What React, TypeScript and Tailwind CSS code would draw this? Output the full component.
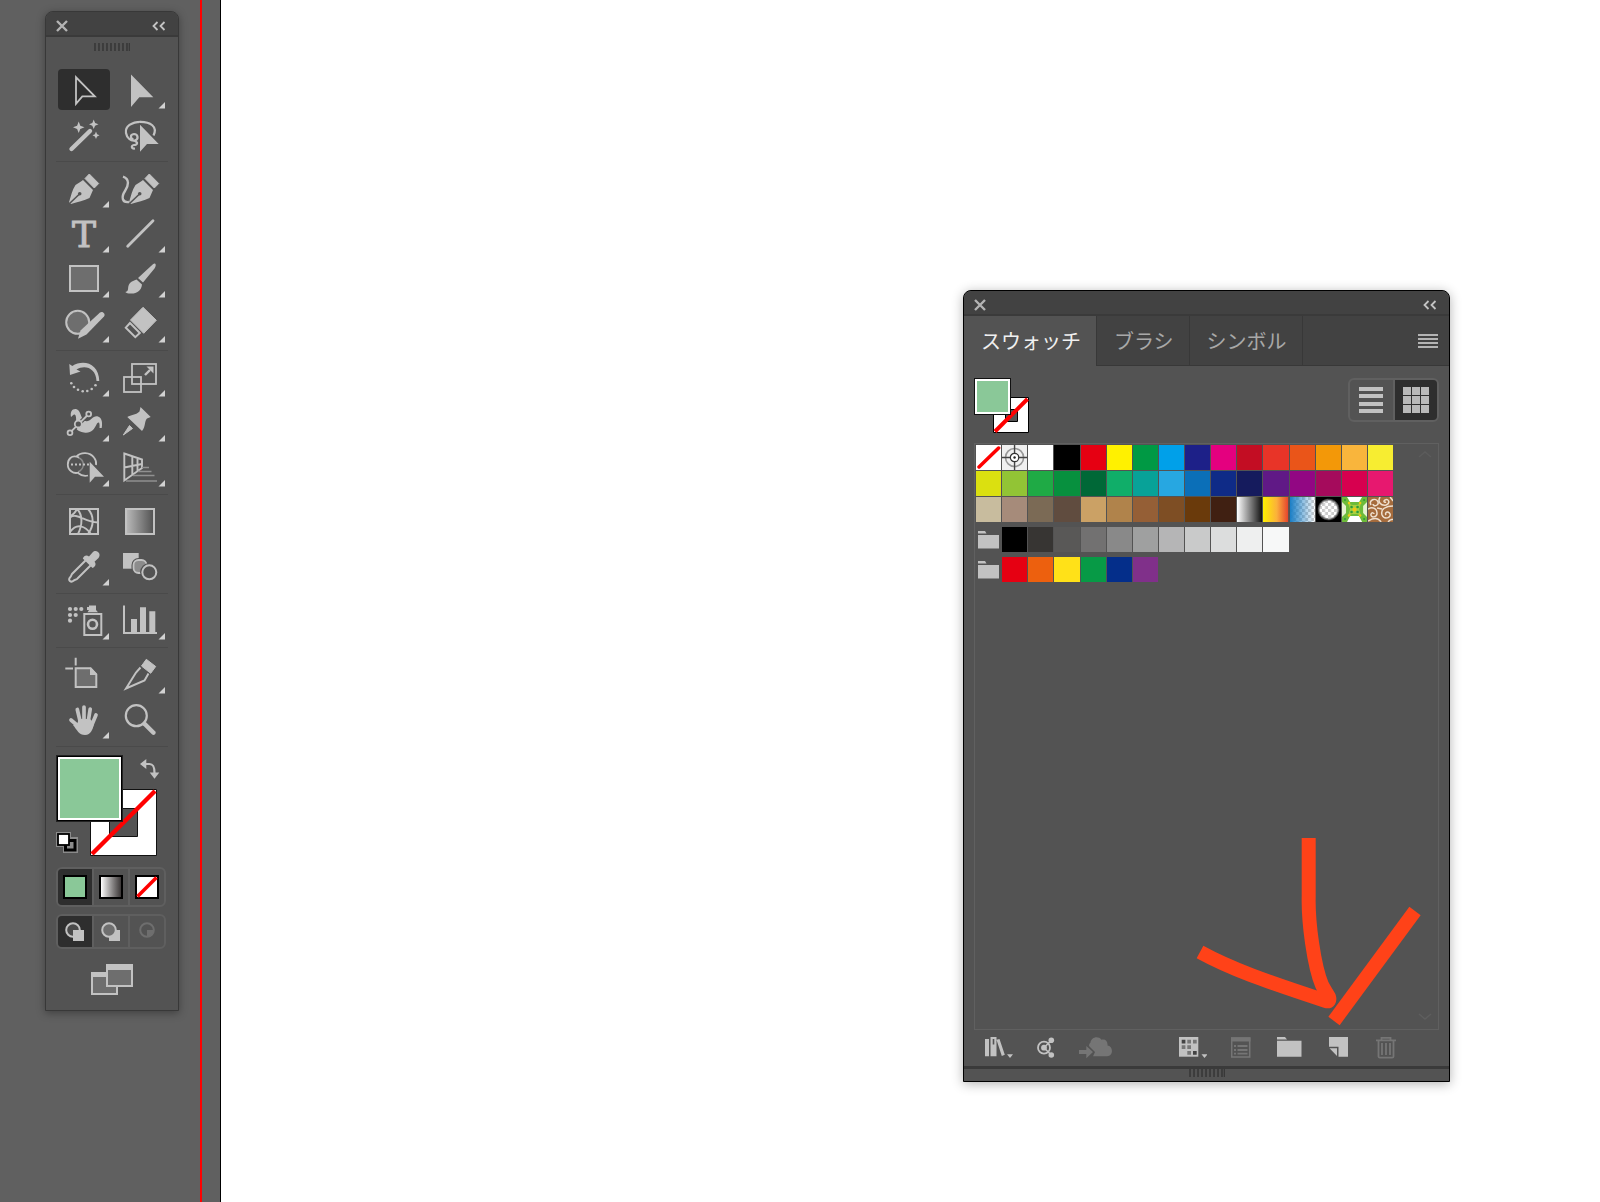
import { useState } from "react"
import type { ReactNode } from "react"

const LIGHT = "#c2c2c2"
const MID = "#6e6e6e"
const PANEL = "#535353"
const GREEN = "#8ac898"

type Tool = {
  name: string
  flyout?: boolean
  icon: ReactNode
}

const PenNib = () => (
  <>
    <path d="M31.3 6L40.7 15.5L36.3 20L27 10.5Z" fill={LIGHT} stroke={LIGHT} strokeLinejoin="round" />
    <path d="M25 12L35 22L31.5 30C26 32.5 20 34 13 36L11 34.3C13 28 14 22 17.5 17C20 15 23 14 25 12Z" fill={LIGHT} />
    <path d="M11 36L21 26.5" stroke={PANEL} strokeWidth="1.6" />
    <circle cx="21.7" cy="25.7" r="1.8" fill={PANEL} />
  </>
)

const toolGroups: Tool[][] = [
  [
    {
      name: "Selection",
      icon: <path d="M18 8.3V34.8L24.3 27.3H36.8Z" fill="none" stroke={LIGHT} strokeWidth="1.8" />,
    },
    {
      name: "Direct Selection",
      flyout: true,
      icon: <path d="M17 5.5V38L25.3 28.3H39.3Z" fill={LIGHT} />,
    },
    {
      name: "Magic Wand",
      icon: (
        <>
          <path d="M13.5 35L32 17" stroke={LIGHT} strokeWidth="4.4" strokeLinecap="round" />
          <path d="M20.7 7.5L22.3 11.7L26.5 13.3L22.3 14.9L20.7 19L19.1 14.9L15 13.3L19.1 11.7Z" fill={LIGHT} />
          <path d="M35.7 5.5L37.1 8.9L40.5 10.3L37.1 11.7L35.7 15L34.3 11.7L31 10.3L34.3 8.9Z" fill={LIGHT} />
          <path d="M38 17.5L39.1 20.2L41.5 21.3L39.1 22.4L38 25L36.9 22.4L34.5 21.3L36.9 20.2Z" fill={LIGHT} />
        </>
      ),
    },
    {
      name: "Lasso",
      icon: (
        <>
          <path d="M27 7.8C17.5 7.8 10.8 12.5 12 19C12.8 24 17 27.5 21 26.5C25 25 24 20 20 20C15.5 20.5 16.5 25 19.5 25M20 26.5C25 28.5 23 31 20 31C17 31.5 17 35 21 34.5" fill="none" stroke={LIGHT} strokeWidth="2.2" />
          <path d="M25 8.5V40L33.5 31H47Z" fill={PANEL} />
          <path d="M39.5 21.5C44 12.5 36 7.8 26.5 7.8" fill="none" stroke={LIGHT} strokeWidth="2.2" />
          <path d="M26 10.7V37.7L33 30H44.7Z" fill={LIGHT} />
        </>
      ),
    },
  ],
  [
    { name: "Pen", flyout: true, icon: <PenNib /> },
    {
      name: "Curvature",
      icon: (
        <>
          <g transform="translate(4 0)"><PenNib /></g>
          <path d="M9 8.7C16 11 14.5 18 11 23C7 29 8 35 15 34" fill="none" stroke={LIGHT} strokeWidth="2.4" />
        </>
      ),
    },
    {
      name: "Type",
      flyout: true,
      icon: (
        <text x="26" y="34" textAnchor="middle" fontSize="36" fill={LIGHT} stroke={LIGHT} className="font-['DejaVu_Serif',serif]">
          T
        </text>
      ),
    },
    {
      name: "Line Segment",
      flyout: true,
      icon: <path d="M13.7 33.3L39 7.7" stroke={LIGHT} strokeWidth="2.8" strokeLinecap="round" />,
    },
    {
      name: "Rectangle",
      flyout: true,
      icon: <rect x="12" y="8" width="28" height="25" fill={MID} stroke={LIGHT} strokeWidth="2" />,
    },
    {
      name: "Paintbrush",
      flyout: true,
      icon: (
        <>
          <path d="M41 5.5C42.5 6.5 41.5 9 40.5 10.5L29 24.5L24 20L37 8C38.5 6.5 40 5 41 5.5Z" fill={LIGHT} />
          <path d="M22.5 21.5L28 26.5C27.5 33 22 36 16.5 35.5C14 35.5 12.5 35 11.3 34C16 33 12.5 29 16 25C18 23 20 22.5 22.5 21.5Z" fill={LIGHT} />
        </>
      ),
    },
    {
      name: "Shaper",
      flyout: true,
      icon: (
        <>
          <circle cx="19.7" cy="19.3" r="11.5" fill={MID} stroke={LIGHT} strokeWidth="2" />
          <path d="M46 8L16 38H24L48 14Z" fill={PANEL} />
          <path d="M42 9.5C44.5 7.5 48 11 46 13.5L28.5 31.5L20 35.7L22.5 27.5Z" fill={LIGHT} />
        </>
      ),
    },
    {
      name: "Eraser",
      flyout: true,
      icon: (
        <>
          <path d="M29 4.3L42.3 17.3L29.7 30.3L16.5 17Z" fill={LIGHT} stroke={LIGHT} strokeLinejoin="round" />
          <path d="M16 20L11.8 24.7L21.3 34.2L25.8 30Z" fill="none" stroke={LIGHT} strokeWidth="2" />
        </>
      ),
    },
  ],
  [
    {
      name: "Rotate",
      flyout: true,
      icon: (
        <>
          <path d="M11.3 7L14.3 9C25 2 41 6 41.3 24H38.5C38 11 27 7.5 18.5 12.5L22.5 14.5L12 18Z" fill={LIGHT} />
          <g fill={LIGHT}>
            <circle cx="13.3" cy="26.3" r="1.3" />
            <circle cx="16" cy="30" r="1.3" />
            <circle cx="20" cy="32.7" r="1.3" />
            <circle cx="24.7" cy="34.3" r="1.3" />
            <circle cx="29.3" cy="34" r="1.3" />
            <circle cx="33.7" cy="32" r="1.3" />
            <circle cx="37.5" cy="28.3" r="1.3" />
          </g>
        </>
      ),
    },
    {
      name: "Scale",
      flyout: true,
      icon: (
        <>
          <rect x="18" y="7" width="24" height="20" fill="none" stroke={LIGHT} strokeWidth="1.8" />
          <rect x="10" y="20" width="17" height="15" fill="none" stroke={LIGHT} strokeWidth="1.8" />
          <path d="M31 18L36 13" stroke={LIGHT} strokeWidth="2.4" />
          <path d="M32.5 9.5H39.5V16.5Z" fill={LIGHT} />
        </>
      ),
    },
    {
      name: "Width",
      flyout: true,
      icon: (
        <>
          <path d="M13 15C12 10 14 6.5 18 7C23 8 22 15 26 18.5C32 22 34 13 40 14.5C44.5 16 44.5 22 43.7 26H41.5C42 21 41 19 39 21.5C36 28 33 31.5 26 30.5C19 29.5 17 26 18 22C18.5 17 18 11.5 16 12.5C15 13 14.5 14 13 15Z" fill={LIGHT} />
          <path d="M12 30.7L30.7 12" stroke={PANEL} strokeWidth="4" />
          <path d="M12 30.7L30.7 12" stroke={LIGHT} strokeWidth="1.8" />
          <circle cx="20.3" cy="22" r="3.5" fill={PANEL} stroke={LIGHT} strokeWidth="1.8" />
          <circle cx="12" cy="30.7" r="2.4" fill={PANEL} stroke={LIGHT} strokeWidth="1.8" />
          <circle cx="30.7" cy="12" r="2.4" fill={PANEL} stroke={LIGHT} strokeWidth="1.8" />
        </>
      ),
    },
    {
      name: "Puppet Warp",
      flyout: true,
      icon: (
        <>
          <path d="M26.5 5L36.7 15L33 16.5C30 20 32 24 28 29L13.3 15C17 12.5 21.5 13.5 25.5 9.5Z" fill={LIGHT} />
          <path d="M9.3 33L15.5 23.5L18.5 26.5Z" fill={LIGHT} stroke={LIGHT} />
        </>
      ),
    },
    {
      name: "Shape Builder",
      flyout: true,
      icon: (
        <>
          <path d="M18.5 9.5C23 4.5 32 5 36 10.5C38 13 38.5 15.5 38 18M20 26C23 28.5 27 29.3 30 28.5" fill="none" stroke={LIGHT} strokeWidth="1.8" />
          <path d="M20 10.5C27 13 27 22 20 25" fill="none" stroke="#8a8a8a" strokeWidth="1.5" />
          <path d="M21 10.5C13 7 9.8 13 9.8 17.5C9.8 23 15 27.5 21 25.5" fill="none" stroke={LIGHT} strokeWidth="1.8" />
          <path d="M13 17.5H31" stroke={LIGHT} strokeWidth="2" strokeDasharray="2 2" />
          <path d="M31.7 14.7V35.7L37 29.7H46Z" fill={LIGHT} />
        </>
      ),
    },
    {
      name: "Perspective Grid",
      flyout: true,
      icon: (
        <>
          <path d="M10.3 6.5L28 12.5V21L10.3 33.5ZM18.3 9.5V27.5M23.5 11V24M10.3 20.5L28 17" fill="none" stroke={LIGHT} strokeWidth="1.9" />
          <path d="M28 20.5H35M24 24.5H37.5M19 28.5H40.5M12 34H43" stroke="#909090" strokeWidth="1.7" />
        </>
      ),
    },
  ],
  [
    {
      name: "Mesh",
      icon: (
        <>
          <rect x="12" y="8" width="28" height="25" fill="none" stroke={LIGHT} strokeWidth="2" />
          <path d="M19 8C25 14 24.5 24 20 33M30 8C36.5 15 36 25 30 33M12 16.5C19 11 26 21 40 21.5M12 31C19 21.5 27 25 33 33M19 8C17 12 15 14 12 15" fill="none" stroke={LIGHT} strokeWidth="1.9" />
        </>
      ),
    },
    {
      name: "Gradient",
      icon: (
        <>
          <defs>
            <linearGradient id="tool-gradient">
              <stop offset="0" stopColor="#bbbbbb" />
              <stop offset="1" stopColor="#505050" />
            </linearGradient>
          </defs>
          <rect x="12" y="8" width="28" height="25" fill="url(#tool-gradient)" stroke={LIGHT} strokeWidth="2" />
        </>
      ),
    },
    {
      name: "Eyedropper",
      flyout: true,
      icon: (
        <>
          <path d="M27.5 14.5L14 28C13 29.5 13.5 30 12 31.5C9.5 34 13 37 15.5 34.8C16.5 33.5 17.5 34 19 33L32.5 19.5" fill="none" stroke={LIGHT} strokeWidth="2" />
          <path d="M24.8 12.5C26 9.5 28.5 8.5 31 10.5L34.5 6.5C38.5 2.5 44 8 40.5 12L36.5 15.7C38.5 18 37.5 20.5 34.5 22Z" fill={LIGHT} />
        </>
      ),
    },
    {
      name: "Blend",
      icon: (
        <>
          <rect x="9" y="7" width="15.7" height="15.7" fill={LIGHT} />
          <rect x="17.5" y="12" width="17" height="17" rx="7" fill={PANEL} />
          <rect x="19.5" y="14" width="13" height="13" rx="5" fill="#8c8c8c" stroke={LIGHT} strokeWidth="1.8" />
          <circle cx="35.3" cy="26.3" r="9.2" fill={PANEL} />
          <circle cx="35.3" cy="26.3" r="7" fill={PANEL} stroke={LIGHT} strokeWidth="2" />
        </>
      ),
    },
  ],
  [
    {
      name: "Symbol Sprayer",
      flyout: true,
      icon: (
        <>
          <g fill={LIGHT}>
            <circle cx="12" cy="9" r="2.1" />
            <circle cx="17.7" cy="9" r="2.1" />
            <circle cx="23.3" cy="9" r="2.1" />
            <circle cx="12" cy="15" r="2.1" />
            <circle cx="17.7" cy="15" r="2.1" />
            <circle cx="12" cy="20.7" r="2.1" />
            <path d="M31 5.5H38V10L40 12.3H29.5L31 10H29V7H31Z" />
          </g>
          <rect x="26.3" y="14" width="17" height="21" fill="none" stroke={LIGHT} strokeWidth="2" />
          <circle cx="34.5" cy="24.3" r="4.5" fill="none" stroke={LIGHT} strokeWidth="2.6" />
        </>
      ),
    },
    {
      name: "Column Graph",
      flyout: true,
      icon: (
        <path d="M9 5.5H11V32H43V34H9ZM17 19H23V32H17ZM26 7.3H32V32H26ZM35.3 11.3H41.3V32H35.3Z" fill={LIGHT} />
      ),
    },
  ],
  [
    {
      name: "Artboard",
      icon: (
        <>
          <path d="M7.3 14.5H15M17.7 3.7V11.5" stroke={LIGHT} strokeWidth="2" />
          <path d="M17.7 14.3H32.5L38.3 20.5V33H17.7Z" fill={MID} stroke={LIGHT} strokeWidth="2" />
          <path d="M32 14V21H39V20L33 13.5Z" fill={LIGHT} />
        </>
      ),
    },
    {
      name: "Slice",
      flyout: true,
      icon: (
        <>
          <path d="M32.3 5.3L41.7 12.5L36.7 19.3L27.5 12Z" fill={LIGHT} stroke={LIGHT} strokeLinejoin="round" />
          <path d="M26.5 13.5L22 18.5L12 34.5L30.5 26.5L34.5 19.5" fill="none" stroke={LIGHT} strokeWidth="2" />
        </>
      ),
    },
    {
      name: "Hand",
      flyout: true,
      icon: (
        <>
          <path d="M13 21L20 27M19.3 10.5L22.5 24M26 8V24M32.2 10L30 24M38 16L33 28" stroke={LIGHT} strokeWidth="3.7" strokeLinecap="round" />
          <path d="M21 20L32 20L36 24C35 30 33 36 27 36C21 36 19 31 15 26L19 25Z" fill={LIGHT} />
        </>
      ),
    },
    {
      name: "Zoom",
      icon: (
        <>
          <circle cx="22.3" cy="16.7" r="10.5" fill="none" stroke={LIGHT} strokeWidth="2.2" />
          <path d="M30.5 24.7L39.5 33.7" stroke={LIGHT} strokeWidth="4.4" strokeLinecap="round" />
        </>
      ),
    },
  ],
]

const swatchRows = [
  ["none", "registration", "#ffffff", "#000000", "#e60012", "#fff100", "#009944", "#00a0e9", "#1d2088", "#e4007f", "#c30d23", "#e83428", "#ea5519", "#f39808", "#f9b53c", "#f7ed31"],
  ["#dbe010", "#92c435", "#1faa45", "#07903e", "#006837", "#10ae69", "#08a298", "#27a7e1", "#0b6fb8", "#0f2b87", "#151b5d", "#601986", "#920783", "#a50b5c", "#d7004f", "#e7186f"],
  ["#c8bc9e", "#a68b7a", "#7b6a55", "#604c3f", "#cba165", "#b0834b", "#955f36", "#7e4e24", "#6a3a0b", "#402012", "fade", "sunset", "sky", "halo", "foliage", "scroll"],
]

const swatchFolders = [
  ["#000000", "#373533", "#595857", "#727171", "#898989", "#9fa0a0", "#b5b5b6", "#c9caca", "#dcdddd", "#eeefef", "#f7f8f8"],
  ["#e60012", "#ed600e", "#ffe118", "#079a46", "#042e8a", "#80308a"],
]

const CloseIcon = () => (
  <svg width="12" height="12" viewBox="0 0 12 12" fill="none" stroke="#b4b4b4" strokeWidth="2.4" className="block">
    <path d="M1 1L11 11M11 1L1 11" />
  </svg>
)

const CollapseIcon = () => (
  <svg width="14" height="10" viewBox="0 0 14 10" fill="none" stroke={LIGHT} strokeWidth="1.8" className="block">
    <path d="M5.5 1L1.5 5L5.5 9M12.5 1L8.5 5L12.5 9" />
  </svg>
)

const Grip = () => (
  <svg width="36" height="8" viewBox="0 0 36 8" className="mx-auto block">
    <path d="M1 0V8M5 0V8M9 0V8M13 0V8M17 0V8M21 0V8M25 0V8M29 0V8M33 0V8M35.5 0V8" stroke="#383838" strokeWidth="1.6" />
  </svg>
)

const TitleBar = () => (
  <div className="flex h-[25px] items-center justify-between border-b-2 border-[#3a3a3a] bg-[#424242] pl-2.5 pr-3 pt-1">
    <button aria-label="Close"><CloseIcon /></button>
    <button aria-label="Collapse"><CollapseIcon /></button>
  </div>
)

const ToolBar = () => {
  const [active, setActive] = useState("Selection")
  return (
    <aside className="absolute left-[45px] top-[11px] w-[134px] overflow-hidden rounded-t-lg border border-[#383838] bg-[#535353] shadow-[0_2px_8px_rgba(0,0,0,0.35)]">
      <TitleBar />
      <div className="px-2.5 pb-[15px] pt-1.5">
        <Grip />
        <div className="mt-[18px]">
          {toolGroups.map((group, i) => (
            <div key={i}>
              <div className="grid grid-cols-2 gap-1 px-0.5">
                {group.map((tool) => (
                  <button
                    key={tool.name}
                    aria-label={tool.name}
                    onClick={() => setActive(tool.name)}
                    className={tool.name === active ? "rounded bg-[#2e2e2e]" : "rounded"}
                  >
                    <svg width="52" height="41" viewBox="0 0 52 41" fill="none" className="block overflow-visible">
                      {tool.icon}
                      {tool.flyout && <path d="M51 33V39.5H44.5Z" fill="#d2d2d2" />}
                    </svg>
                  </button>
                ))}
              </div>
              <div className="my-1.5 h-px bg-[#4a4a4a]"></div>
            </div>
          ))}
        </div>
        <FillStroke />
        <div className="mt-2.5 flex h-10 w-[110px] overflow-hidden rounded-md border-2 border-[#5f5f5f]">
          <button aria-label="Color" className="flex flex-1 items-center justify-center bg-[#2e2e2e]">
            <span className="size-6 border-2 border-black bg-[#8ac898]"></span>
          </button>
          <button aria-label="Gradient" className="flex flex-1 items-center justify-center border-x-2 border-[#5f5f5f]">
            <span className="size-6 border-2 border-black bg-linear-to-r from-white to-[#3c3838]"></span>
          </button>
          <button aria-label="None" className="flex flex-1 items-center justify-center">
            <svg width="24" height="24" viewBox="0 0 24 24">
              <rect x="1" y="1" width="22" height="22" fill="#fff" stroke="#000" strokeWidth="2" />
              <path d="M2.5 21.5L21.5 2.5" stroke="#f00" strokeWidth="3.5" />
            </svg>
          </button>
        </div>
        <div className="mt-[7px] flex h-[35px] w-[110px] overflow-hidden rounded-md border-2 border-[#5f5f5f]">
          <button aria-label="Draw Normal" className="flex flex-1 items-center justify-center bg-[#2e2e2e]">
            <svg width="20" height="20" viewBox="0 0 20 20">
              <circle cx="8" cy="8" r="6.8" fill="#4a4a4a" stroke={LIGHT} strokeWidth="2" />
              <rect x="8" y="8" width="11" height="11" fill={LIGHT} />
            </svg>
          </button>
          <button aria-label="Draw Behind" className="flex flex-1 items-center justify-center border-x-2 border-[#5f5f5f]">
            <svg width="20" height="20" viewBox="0 0 20 20">
              <rect x="8" y="8" width="11" height="11" fill={LIGHT} />
              <circle cx="8" cy="8" r="6.8" fill={MID} stroke={LIGHT} strokeWidth="2" />
            </svg>
          </button>
          <button aria-label="Draw Inside" className="flex flex-1 items-center justify-center">
            <svg width="20" height="20" viewBox="0 0 20 20">
              <circle cx="10" cy="8" r="6.8" fill="none" stroke={MID} strokeWidth="2" />
              <path d="M10 8H17C17 12 14 15 10 15Z" fill={MID} />
            </svg>
          </button>
        </div>
        <button aria-label="Change Screen Mode" className="mx-auto mt-[15px] block">
          <svg width="42" height="31" viewBox="0 0 42 31" className="block">
            <rect x="1" y="9" width="25" height="21" fill={MID} stroke={LIGHT} strokeWidth="2" />
            <rect x="1" y="8" width="25" height="5" fill={LIGHT} />
            <rect x="16" y="1" width="25" height="21" fill={MID} stroke={LIGHT} strokeWidth="2" />
            <rect x="15" y="0" width="27" height="6" fill={LIGHT} />
          </svg>
        </button>
      </div>
    </aside>
  )
}

const FillStroke = () => (
  <div className="relative mt-2 w-[102px]">
    <button aria-label="Fill and Stroke" className="block">
      <svg width="102" height="102" viewBox="0 0 102 102" className="block">
        <path d="M34.5 34.5H100.500V100.500H34.5ZM53.5 53.5V81.5H81.5V53.5Z" fill="#fff" fillRule="evenodd" stroke="#111" />
        <path d="M36 99L99 36" stroke="#f00" strokeWidth="4.5" />
        <rect x="0" y="0" width="67" height="67" fill="#222" />
        <rect x="1" y="1" width="65" height="65" fill="#000" />
        <rect x="2" y="2" width="63" height="63" fill="#fff" />
        <rect x="4" y="4" width="59" height="59" fill={GREEN} />
      </svg>
    </button>
    <button aria-label="Swap Fill and Stroke" className="absolute left-[84px] top-1">
      <svg width="20" height="20" viewBox="0 0 20 20" className="block">
        <path d="M5.5 5H9.5C13.5 5 14.5 8 14.5 14" fill="none" stroke={LIGHT} strokeWidth="2.2" />
        <path d="M0 5L6.3 0V10ZM9.7 13.5H19.3L14.5 19.7Z" fill={LIGHT} />
      </svg>
    </button>
    <button aria-label="Default Fill and Stroke" className="absolute left-0 top-[77px]">
      <svg width="24" height="22" viewBox="0 0 24 22" className="block">
        <path d="M0 0H15V5H22V21H7V15H0Z" fill="#8a8a8a" />
        <rect x="9.5" y="8.5" width="9.500" height="9.5" fill="#8a8a8a" stroke="#000" strokeWidth="3" />
        <rect x="2" y="2" width="11" height="11" fill="#fff" stroke="#000" strokeWidth="1.8" />
      </svg>
    </button>
  </div>
)

const SwatchArt = ({ kind }: { kind: string }) => {
  if (kind === "none") {
    return (
      <>
        <rect width="25" height="25" fill="#fff" />
        <path d="M3 22L22.5 3" stroke="#f00" strokeWidth="3.5" strokeLinecap="round" />
      </>
    )
  }
  if (kind === "registration") {
    return (
      <>
        <rect width="25" height="25" fill="#f0f0f0" />
        <circle cx="12.5" cy="12.5" r="9" fill="none" stroke="#999" strokeWidth="1.6" />
        <path d="M12.5 0V25M0 12.5H25" stroke="#444" strokeWidth="1.4" />
        <circle cx="12.5" cy="12.5" r="4.2" fill="#fff" stroke="#333" strokeWidth="1.2" />
        <circle cx="12.5" cy="12.5" r="1.2" fill="#222" />
      </>
    )
  }
  if (kind === "fade") {
    return (
      <>
        <linearGradient id="fade"><stop stopColor="#fff" /><stop offset="1" stopColor="#111" /></linearGradient>
        <rect width="25" height="25" fill="url(#fade)" />
      </>
    )
  }
  if (kind === "sunset") {
    return (
      <>
        <linearGradient id="sunset">
          <stop stopColor="#fff000" />
          <stop offset="0.55" stopColor="#fbb03b" />
          <stop offset="1" stopColor="#e7442d" />
        </linearGradient>
        <rect width="25" height="25" fill="url(#sunset)" />
      </>
    )
  }
  if (kind === "sky") {
    return (
      <>
        <pattern id="checks" width="6" height="6" patternUnits="userSpaceOnUse">
          <rect width="6" height="6" fill="#fff" />
          <path d="M0 0H3V3H0ZM3 3H6V6H3Z" fill="#ccc" />
        </pattern>
        <linearGradient id="sky"><stop stopColor="#1b7fc6" /><stop offset="1" stopColor="#1b7fc6" stopOpacity="0" /></linearGradient>
        <rect width="25" height="25" fill="url(#checks)" />
        <rect width="25" height="25" fill="url(#sky)" />
      </>
    )
  }
  if (kind === "halo") {
    return (
      <>
        <radialGradient id="halo">
          <stop offset="0.65" stopColor="#000" stopOpacity="0" />
          <stop offset="0.9" stopColor="#000" />
        </radialGradient>
        <rect width="25" height="25" fill="url(#checks)" />
        <rect width="25" height="25" fill="url(#halo)" />
      </>
    )
  }
  if (kind === "foliage") {
    return (
      <>
        <rect width="25" height="25" fill="#fff" />
        <path d="M0 0H5L8 5H17L20 0H25V25H20L17 19H8L5 25H0Z" fill="#6dbb3a" />
        <path d="M0 5L4 9V16L0 20ZM25 5L21 9V16L25 20Z" fill="#e6f2cf" />
        <path d="M6 6L10 8H15L19 6L17 12L19 19L15 17H10L6 19L8 12Z" fill="#a9cf3e" />
        <g fill="#f3c613">
          <circle cx="12.5" cy="12.5" r="2" />
          <circle cx="7" cy="6" r="1.3" />
          <circle cx="18" cy="6" r="1.3" />
          <circle cx="7" cy="18.5" r="1.3" />
          <circle cx="18" cy="18.5" r="1.3" />
        </g>
        <g fill="#2c9a3a">
          <circle cx="9.5" cy="10" r="1.3" />
          <circle cx="15.5" cy="10" r="1.3" />
          <circle cx="9.5" cy="15" r="1.3" />
          <circle cx="15.5" cy="15" r="1.3" />
          <circle cx="3" cy="3" r="1" />
          <circle cx="22" cy="3" r="1" />
          <circle cx="3" cy="22" r="1" />
          <circle cx="22" cy="22" r="1" />
        </g>
      </>
    )
  }
  return (
    <>
      <rect width="25" height="25" fill="#a56b3c" />
      <g fill="none" stroke="#efe0cf" strokeWidth="1.5">
        <path d="M3 8C0 3 8 0 10 5C11 9 5 10 5 7M0 12C5 9 9 12 9 16C9 21 2 21 3 17C4 15 6 16 6 17" />
        <path d="M12 0C9 5 13 9 18 8C23 6 20 1 17 3C15 4 16 6 18 5M25 9C18 9 12 12 14 18C16 23 23 21 22 17C20 13 16 16 18 18" />
        <path d="M0 24C5 21 10 20 13 25M22 0L25 4M9 11L14 12M20 25C22 22 24 23 25 22" />
      </g>
    </>
  )
}

const Swatch = ({ value }: { value: string }) => {
  if (value.startsWith("#")) {
    return <button aria-label={value} className="h-[25px]" style={{ backgroundColor: value }}></button>
  }
  return (
    <button aria-label={value} className="h-[25px] overflow-hidden">
      <svg viewBox="0 0 25 25" preserveAspectRatio="none" className="block h-[25px] w-full">
        <SwatchArt kind={value} />
      </svg>
    </button>
  )
}

const tabs = ["スウォッチ", "ブラシ", "シンボル"]

const SwatchPanel = () => {
  const [tab, setTab] = useState(tabs[0])
  return (
    <section className="absolute left-[963px] top-[290px] w-[487px] rounded-t-lg border border-black bg-[#535353] shadow-[0_2px_12px_rgba(0,0,0,0.3)]">
      <div className="overflow-hidden rounded-t-lg">
        <TitleBar />
      </div>
      <div className="flex h-[50px] bg-[#424242]">
        <div role="tablist" className="flex font-['Noto_Sans_CJK_JP',sans-serif] text-xl leading-6">
          {tabs.map((name) => (
            <button
              key={name}
              role="tab"
              aria-selected={name === tab}
              onClick={() => setTab(name)}
              className={
                name === tab
                  ? "border-r border-[#383838] bg-[#535353] pl-[17px] pr-[15px] text-[#f0f0f0]"
                  : "border-b border-r border-[#383838] pl-[17px] pr-[15px] text-[#a8a8a8]"
              }
            >
              {name}
            </button>
          ))}
        </div>
        <div className="flex flex-1 items-center justify-end border-b border-[#383838] pr-[11px]">
          <button aria-label="Panel menu">
            <svg width="20" height="14" viewBox="0 0 20 14" className="block">
              <path d="M0 1H20M0 5H20M0 9H20M0 13H20" stroke="#b4b4b4" strokeWidth="1.8" />
            </svg>
          </button>
        </div>
      </div>
      <div className="px-2.5 pt-3">
        <div className="flex items-start justify-between">
          <button aria-label="Fill and Stroke">
            <svg width="56" height="56" viewBox="0 0 56 56" className="block">
              <path d="M19.5 19.5H54.5V54.5H19.5ZM31.5 31.5V43.5H43.5V31.5Z" fill="#fff" fillRule="evenodd" stroke="#000" />
              <path d="M21 53.5L53.5 21" stroke="#f00" strokeWidth="4" />
              <rect width="37" height="37" fill="#111" />
              <rect x="1" y="1" width="35" height="35" fill="#fff" />
              <rect x="3" y="3" width="31" height="31" fill={GREEN} />
            </svg>
          </button>
          <div className="flex h-11 w-[91px] overflow-hidden rounded-md border-2 border-[#606060]">
            <button aria-label="List view" className="flex flex-1 items-center justify-center">
              <svg width="24" height="26" viewBox="0 0 24 26">
                <path d="M0 2H24M0 9H24M0 17H24M0 24H24" stroke={LIGHT} strokeWidth="4" />
              </svg>
            </button>
            <button aria-label="Thumbnail view" className="flex flex-1 items-center justify-center border-l-2 border-[#606060] bg-[#2e2e2e]">
              <svg width="26" height="26" viewBox="0 0 26 26">
                <path d="M0 4H26M0 13H26M0 22H26" stroke="#b9b9b9" strokeWidth="8" strokeDasharray="8 1" />
              </svg>
            </button>
          </div>
        </div>
        <div className="mt-[9px] flex h-[587px] justify-between border border-[#606060] pl-px pt-px">
          <div className="flex w-[417px] flex-col gap-[5px]">
            <div className="grid grid-cols-16 gap-px">
              {swatchRows.flat().map((value) => (
                <Swatch key={value} value={value} />
              ))}
            </div>
            {swatchFolders.map((colors, i) => (
              <div key={i} className="grid grid-cols-16 gap-px">
                <button aria-label="Color group">
                  <svg width="25" height="25" viewBox="0 0 25 25" className="block">
                    <path d="M2 4H9L10.5 6.5H2ZM2 8H23V21.5H2Z" fill={LIGHT} />
                  </svg>
                </button>
                {colors.map((value) => (
                  <Swatch key={value} value={value} />
                ))}
              </div>
            ))}
          </div>
          <div className="flex flex-col justify-between pb-2 pr-1.5 pt-[5px]">
            <svg width="14" height="8" viewBox="0 0 14 8"><path d="M1 7L7 2L13 7" fill="none" stroke="#5c5c5c" strokeWidth="1.5" /></svg>
            <svg width="14" height="8" viewBox="0 0 14 8"><path d="M1 1L7 6L13 1" fill="none" stroke="#5e5e5e" strokeWidth="1.5" /></svg>
          </div>
        </div>
        <div className="flex h-9 items-center justify-between pl-[11px] pr-[42px]">
          <div className="flex gap-6">
            <button aria-label="Swatch Libraries">
              <svg width="28" height="22" viewBox="0 0 28 22" fill={LIGHT} className="block">
                <path d="M0 2H4V19.3H0ZM5.5 0H11.5V19.3H5.5ZM11.5 2.8L14.5 2L19.8 17.8L16.8 19Z" />
                <path d="M7.7 2H9.3V7.5H7.7Z" fill={PANEL} />
                <path d="M22 17.3H28L25 21Z" />
              </svg>
            </button>
            <button aria-label="Color Themes">
              <svg width="18" height="22" viewBox="0 0 18 22" className="block">
                <circle cx="7" cy="10.7" r="6" fill="none" stroke={LIGHT} strokeWidth="1.8" />
                <path d="M14.3 3.3L7 10.7L14.3 18" fill="none" stroke={LIGHT} strokeWidth="1.5" />
                <g fill={LIGHT}>
                  <circle cx="7" cy="10.7" r="2.9" />
                  <circle cx="14.3" cy="3.3" r="2.8" />
                  <circle cx="14.3" cy="18" r="2.8" />
                </g>
              </svg>
            </button>
            <button aria-label="Add to Library">
              <svg width="34" height="22" viewBox="0 0 34 22" fill="#757575" className="block">
                <path d="M14 19.3H28C35 18.5 34 9 28.5 8.5C29 3.5 25.5 1.5 22.5 2.8C18.5 -2 12 1 11.5 5.5C10.5 6.5 10 7.5 10 9L16 15Z" />
                <path d="M0 13H7.3V9L14 15L7.3 21.3V17H0Z" />
              </svg>
            </button>
          </div>
          <div className="flex gap-6">
            <button aria-label="Show Swatch Kinds">
              <svg width="28" height="22" viewBox="0 0 28 22" fill={LIGHT} className="block">
                <path d="M0 0H19.3V19.7H0Z" />
                <path d="M2.7 2.7H6.4V6.4H2.7ZM14 14H17.7V17.7H14Z" fill="#444" />
                <path d="M8.3 2.7H12V6.4H8.3ZM14 2.7H17.7V6.4H14ZM2.7 8.3H6.4V12H2.7ZM8.3 8.3H12V12H8.3ZM8.3 14H12V17.7H8.3Z" fill="#777" />
                <path d="M22.5 17.3H28.5L25.5 21Z" />
              </svg>
            </button>
            <button aria-label="Swatch Options">
              <svg width="22" height="22" viewBox="0 0 22 22" fill="none" stroke="#757575" className="block">
                <rect x="0.7" y="1" width="18" height="19" strokeWidth="1.6" />
                <path d="M0 2.5H19.5" strokeWidth="4" />
                <path d="M3 9H5M3 13H5M3 16.7H5M6.5 9H16.5M6.5 13H16.5M6.5 16.7H16.5" strokeWidth="1.8" />
              </svg>
            </button>
            <button aria-label="New Color Group">
              <svg width="28" height="22" viewBox="0 0 28 22" fill={LIGHT} className="block">
                <path d="M0 0H8L10 2.5H0ZM0 3.7H24.5V19.7H0Z" />
              </svg>
            </button>
            <button aria-label="New Swatch">
              <svg width="22" height="22" viewBox="0 0 22 22" fill={LIGHT} className="block">
                <path d="M0 0H19V19.7H9.5V9.7H0ZM0.5 11.3H8V19Z" />
              </svg>
            </button>
            <button aria-label="Delete Swatch">
              <svg width="22" height="22" viewBox="0 0 22 22" fill="none" stroke="#757575" strokeWidth="1.8" className="block">
                <path d="M1 3.3H21M6.5 3V0.8H15.5V3M3.5 4V19.5C3.5 20.5 4 20.7 5 20.7H17C18 20.7 18.5 20.5 18.5 19.5V4M7 6V18M11 6V18M15 6V18" />
              </svg>
            </button>
          </div>
        </div>
      </div>
      <div className="h-[15px] border-t-3 border-[#3a3a3a]">
        <Grip />
      </div>
      <Scribble />
    </section>
  )
}

// hand drawn arrow pointing at the New Swatch button
const Scribble = () => (
  <svg
    width="230"
    height="196"
    viewBox="0 0 230 196"
    fill="none"
    stroke="#ff4218"
    strokeWidth="14"
    strokeLinejoin="round"
    className="pointer-events-none absolute left-[231px] top-[543px]"
  >
    <path d="M5 118C36 135 70 147 131 167C134 168 135 166 134 163C132 159 130 157 127 151C119 132 113 88 113.7 62V4" />
    <path d="M220 77L139 187" />
  </svg>
)

const App = () => {
  return (
    <main className="relative flex min-h-screen overflow-hidden bg-white">
      <div className="w-[200px] bg-[#606060]"></div>
      <div className="w-0.5 bg-[#f00]"></div>
      <div className="w-[19px] border-r border-black bg-[#606060]"></div>
      <ToolBar />
      <SwatchPanel />
    </main>
  )
}

export default App
